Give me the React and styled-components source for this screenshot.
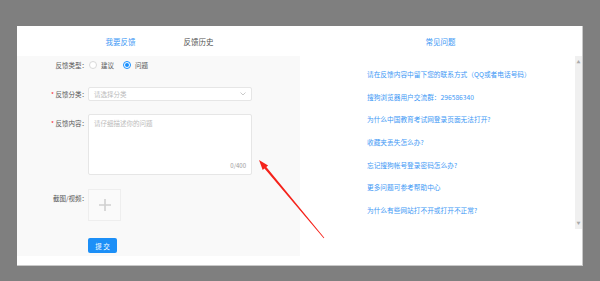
import styled, { createGlobalStyle } from "styled-components";

const Global = createGlobalStyle`
  html, body {
    margin: 0;
    padding: 0;
    background: #7f7f7f;
    font-family: "Noto Sans CJK SC", "Noto Sans", sans-serif;
  }
`;

const Page = styled.div`
  position: relative;
  width: 600px;
  height: 281px;
  padding: 26px 0 0 17px;
  box-sizing: border-box;
`;

const Panel = styled.div`
  width: 566px;
  height: 240px;
  background: #fff;
  border-right: 1px solid #c9c9c9;
  border-bottom: 1px solid #c9c9c9;
  box-sizing: border-box;
  display: flex;
`;

const LeftCol = styled.div`
  width: 283px;
  display: flex;
  flex-direction: column;
`;

const Tabs = styled.div`
  height: 30px;
  display: flex;
  justify-content: center;
  align-items: center;
  gap: 48px;
  padding-left: 2px;
`;

const Tab = styled.div`
  font-size: 7.5px;
  color: ${(p) => (p.$active ? "#3d98f5" : "#555")};
`;

const FormArea = styled.div`
  height: 200px;
  background: #f9f9f9;
  padding-top: 2px;
  box-sizing: border-box;
`;

const Row = styled.div`
  display: flex;
  align-items: ${(p) => p.$align || "center"};
  margin-top: ${(p) => p.$mt || 0}px;
`;

const Label = styled.div`
  width: 71px;
  text-align: right;
  font-size: 6.5px;
  line-height: 14px;
  color: #555;
  white-space: nowrap;
  padding-top: ${(p) => p.$pt || 0}px;

  &::before {
    content: "${(p) => (p.$required ? "* " : "")}";
    color: #f5222d;
  }
`;

const RadioGroup = styled.div`
  display: flex;
  align-items: center;
  height: 14px;
  margin-left: 1px;
`;

const Radio = styled.span`
  width: 8px;
  height: 8px;
  border-radius: 50%;
  box-sizing: border-box;
  border: 1px solid ${(p) => (p.$checked ? "#1890ff" : "#d9d9d9")};
  background: #fff;
  display: flex;
  align-items: center;
  justify-content: center;

  &::after {
    content: "";
    width: 4px;
    height: 4px;
    border-radius: 50%;
    background: ${(p) => (p.$checked ? "#1890ff" : "transparent")};
  }
`;

const RadioText = styled.span`
  font-size: 6.5px;
  color: #555;
  margin: 0 9px 0 4px;
`;

const Select = styled.div`
  width: 164px;
  height: 14px;
  background: #fff;
  border: 1px solid #e6e6e6;
  border-radius: 2px;
  box-sizing: border-box;
  display: flex;
  align-items: center;
  justify-content: space-between;
  padding: 0 5px 0 5px;
`;

const Placeholder = styled.span`
  font-size: 6.5px;
  color: #bbb;
`;

const TextBox = styled.div`
  width: 164px;
  height: 61px;
  background: #fff;
  border: 1px solid #e6e6e6;
  border-radius: 2px;
  box-sizing: border-box;
  padding: 3px 5px 4px;
  display: flex;
  flex-direction: column;
  justify-content: space-between;
`;

const Counter = styled.span`
  align-self: flex-end;
  font-size: 6px;
  color: #999;
`;

const Upload = styled.div`
  width: 33px;
  height: 32px;
  background: #fafafa;
  border: 1px solid #eee;
  box-sizing: border-box;
  display: flex;
  align-items: center;
  justify-content: center;
`;

const SubmitButton = styled.button`
  width: 29px;
  height: 15px;
  padding: 0;
  border: none;
  border-radius: 2px;
  background: #1c8ff7;
  color: #fff;
  font-family: inherit;
  font-size: 6.5px;
  margin-left: 71px;
`;

const RightCol = styled.div`
  flex: 1;
  display: flex;
  flex-direction: column;
`;

const FaqTitle = styled.div`
  height: 30px;
  display: flex;
  align-items: center;
  justify-content: center;
  font-size: 7.5px;
  color: #3d98f5;
  padding-right: 1px;
`;

const FaqBody = styled.div`
  display: flex;
  height: 173px;
`;

const FaqList = styled.div`
  flex: 1;
  padding: 11px 0 0 67px;
  display: flex;
  flex-direction: column;
  gap: 8.7px;
`;

const FaqLink = styled.a`
  font-size: 6.7px;
  line-height: 14px;
  color: #3d98f5;
  text-decoration: none;
  white-space: nowrap;
`;

const ScrollTrack = styled.div`
  width: 7px;
  background: #f0f0f0;
  display: flex;
  flex-direction: column;
  justify-content: space-between;
  align-items: center;
  padding: 4px 0;
  box-sizing: border-box;
  font-size: 4px;
  color: #aaa;
  line-height: 4px;
`;

const Arrow = styled.svg`
  position: absolute;
  left: 0;
  top: 0;
  pointer-events: none;
`;

const faqs = [
  "请在反馈内容中留下您的联系方式（QQ或者电话号码）",
  "搜狗浏览器用户交流群：296586340",
  "为什么中国教育考试网登录页面无法打开?",
  "收藏夹丢失怎么办?",
  "忘记搜狗帐号登录密码怎么办?",
  "更多问题可参考帮助中心",
  "为什么有些网站打不开或打开不正常?",
];

export default function App() {
  return (
    <Page>
      <Global />
      <Panel>
        <LeftCol>
          <Tabs>
            <Tab $active>我要反馈</Tab>
            <Tab>反馈历史</Tab>
          </Tabs>
          <FormArea>
            <Row>
              <Label>反馈类型：</Label>
              <RadioGroup>
                <Radio />
                <RadioText>建议</RadioText>
                <Radio $checked />
                <RadioText>问题</RadioText>
              </RadioGroup>
            </Row>
            <Row $mt={15}>
              <Label $required>反馈分类：</Label>
              <Select>
                <Placeholder>请选择分类</Placeholder>
                <svg width="6" height="4" viewBox="0 0 6 4">
                  <path d="M0.5 0.5 L3 3 L5.5 0.5" fill="none" stroke="#bbb" strokeWidth="0.8" />
                </svg>
              </Select>
            </Row>
            <Row $mt={13} $align="flex-start">
              <Label $required $pt={2}>反馈内容：</Label>
              <TextBox>
                <Placeholder>请仔细描述你的问题</Placeholder>
                <Counter>0/400</Counter>
              </TextBox>
            </Row>
            <Row $mt={14} $align="flex-start">
              <Label $pt={2}>截图/视频：</Label>
              <Upload>
                <svg width="12" height="12" viewBox="0 0 12 12">
                  <path d="M6 0 V12 M0 6 H12" stroke="#d0d0d0" strokeWidth="1.6" />
                </svg>
              </Upload>
            </Row>
            <Row $mt={17}>
              <SubmitButton>提 交</SubmitButton>
            </Row>
          </FormArea>
        </LeftCol>
        <RightCol>
          <FaqTitle>常见问题</FaqTitle>
          <FaqBody>
            <FaqList>
              {faqs.map((q) => (
                <FaqLink key={q} href="#">{q}</FaqLink>
              ))}
            </FaqList>
            <ScrollTrack>
              <span>▲</span>
              <span>▼</span>
            </ScrollTrack>
          </FaqBody>
        </RightCol>
      </Panel>
      <Arrow width="600" height="281" viewBox="0 0 600 281">
        <polygon
          points="259,160 262.7,169.9 264.5,168.5 323.7,238.3 324.3,237.7 266.3,166.9 268.1,165.5"
          fill="#f5231b"
        />
      </Arrow>
    </Page>
  );
}
